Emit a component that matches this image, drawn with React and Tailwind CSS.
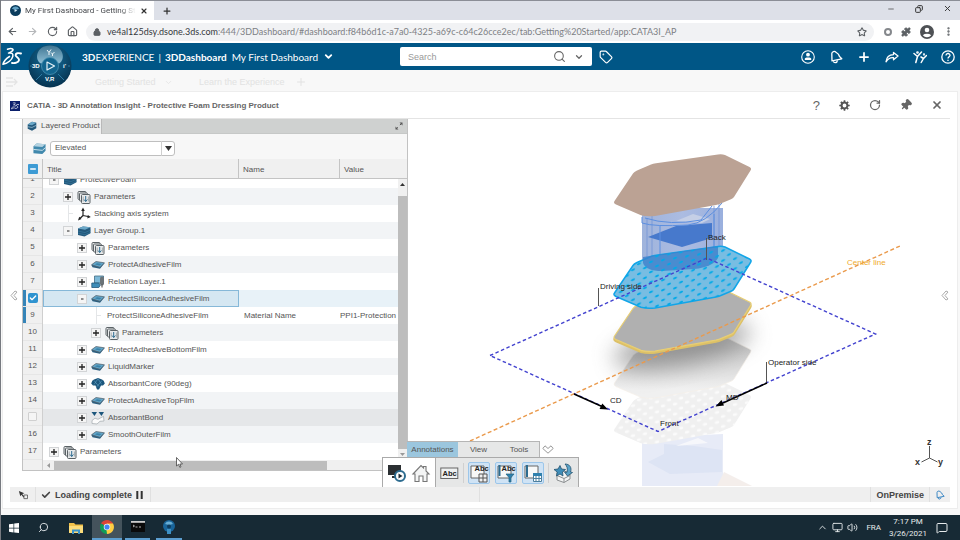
import React from 'react';
import { ArrowLeft, ArrowRight, RotateCw, Home, Lock, X, Plus, Star, Puzzle, ChevronDown, ChevronUp, Tag, Search, Pin, Check, Minus, Copy, MoreVertical, Monitor, Volume2, MessageSquare } from 'lucide-react';

const treeRows = [
  { id: 1, level: 0, exp: '-', icon: 'group', title: 'ProtectiveFoam' },
  { id: 2, level: 1, exp: '+', icon: 'params', title: 'Parameters' },
  { id: 3, level: 1, exp: '', icon: 'axis', title: 'Stacking axis system' },
  { id: 4, level: 1, exp: '-', icon: 'group', title: 'Layer Group.1' },
  { id: 5, level: 2, exp: '+', icon: 'params', title: 'Parameters' },
  { id: 6, level: 2, exp: '+', icon: 'film', title: 'ProtectAdhesiveFilm' },
  { id: 7, level: 2, exp: '+', icon: 'relation', title: 'Relation Layer.1' },
  { id: 8, level: 2, exp: '-', icon: 'film', title: 'ProtectSiliconeAdhesiveFilm', selected: true },
  { id: 9, level: 3, exp: '', icon: null, title: 'ProtectSiliconeAdhesiveFilm', name: 'Material Name', value: 'PPI1-Protection', child: true },
  { id: 10, level: 3, exp: '+', icon: 'params', title: 'Parameters' },
  { id: 11, level: 2, exp: '+', icon: 'film', title: 'ProtectAdhesiveBottomFilm' },
  { id: 12, level: 2, exp: '+', icon: 'film', title: 'LiquidMarker' },
  { id: 13, level: 2, exp: '+', icon: 'core', title: 'AbsorbantCore (90deg)' },
  { id: 14, level: 2, exp: '+', icon: 'film', title: 'ProtectAdhesiveTopFilm' },
  { id: 15, level: 2, exp: '+', icon: 'bond', title: 'AbsorbantBond', hover: true },
  { id: 16, level: 2, exp: '+', icon: 'film', title: 'SmoothOuterFilm' },
  { id: 17, level: 0, exp: '+', icon: 'params', title: 'Parameters' },
];

const indents = ['pl-[6px]', 'pl-[20px]', 'pl-[34px]', 'pl-[48px]'];

function TreeIcon({ type }) {
  if (type === 'params') {
    return (
      <svg className="h-[14px] w-[14px] shrink-0" viewBox="0 0 14 14" fill="#e9ebec" stroke="#5b6266" strokeWidth="1">
        <rect x="1" y="1.5" width="8" height="8" rx="1" />
        <rect x="2.5" y="3" width="8" height="8" rx="1" />
        <rect x="4.5" y="4.5" width="8.5" height="9" rx="1" />
        <path d="M8.7 6v5.5M7 9.5l1.7 2 1.7-2" stroke="#2d6c90" />
        <path d="M6.2 6.5v5M11.4 6.5v5" stroke="#8a9094" strokeWidth=".7" />
      </svg>
    );
  }
  if (type === 'axis') {
    return (
      <svg className="h-[14px] w-[14px] shrink-0" viewBox="0 0 14 14" fill="#222" stroke="#222" strokeWidth="1.2">
        <path d="M6 8.5V3M6 8.5L11 9.5M6 8.5L3 11.5" fill="none" />
        <path d="M6 .5l1.8 3.5H4.2zM13.8 10l-3.5 1.6.5-3.5zM1 13.5l1.2-3.8 2.3 2.3z" stroke="none" />
      </svg>
    );
  }
  if (type === 'group') {
    return (
      <svg className="h-[14px] w-[14px] shrink-0" viewBox="0 0 14 14">
        <path d="M1 4.5L6 2.5l7.5.8v6L7.5 12.500 1 11z" fill="#24597c" />
        <path d="M1 4.500L6 2.500l7.500.8L8 5.800z" fill="#6ba8c8" />
        <path d="M1 7l7 1.600 5.500-2.400M1 9.200l7 1.500 5.500-2.300" stroke="#3b7ea3" fill="none" strokeWidth=".6" />
      </svg>
    );
  }
  if (type === 'relation') {
    return (
      <svg className="h-[14px] w-[14px] shrink-0" viewBox="0 0 14 14">
        <path d="M3.500 1h9v7h-9z" fill="#7db9d8" stroke="#426c84" strokeWidth=".8" />
        <path d="M.8 8h7l1.500 2.200-1.500 2.300h-7z" fill="#3f8db8" stroke="#25587a" strokeWidth=".8" />
        <path d="M9 3.500a2 2 0 0 1 4 0v5a2 2 0 0 1-4 0z" fill="#6b7378" />
        <path d="M11 9.500v3" stroke="#444" />
      </svg>
    );
  }
  if (type === 'core') {
    return (
      <svg className="h-[14px] w-[14px] shrink-0" viewBox="0 0 14 14">
        <path d="M.2 6.500Q1 3 3 2.500L7 1l4 1.500q2 .5 2.800 4L12 8.500l-2 0L8 12.500H6L4.500 8.500 2 8.500z" fill="#1c567c" />
        <path d="M3 3.500l5 6M7 1.800l3.500 5.500M11 3.500L5.500 10M7 1.800L3 7.500" stroke="#6aaed0" strokeWidth=".5" />
      </svg>
    );
  }
  if (type === 'bond') {
    return (
      <svg className="h-[14px] w-[14px] shrink-0" viewBox="0 0 14 14">
        <path d="M.5 1h5.500L3.500 5zM7.500 1h5.500l-2.500 4z" fill="#1c567c" />
        <path d="M1 9.500l3-2.300 3 1.100 5.500-3 .5 4.700-4 .3-3 2.700-5-.5z" fill="#fbfbfb" stroke="#a9b0b4" strokeWidth=".8" />
      </svg>
    );
  }
  return (
    <svg className="h-[14px] w-[14px] shrink-0" viewBox="0 0 14 14">
      <path d="M.5 7.300L5 4l8.500 1.300L9 10.800 1.500 9.300z" fill="#2b5f80" />
      <path d="M.5 6.800L5 3.500l8.500 1.300L9 9.300z" fill="#62a5c8" stroke="#56626a" strokeWidth=".7" />
      <path d="M4 6.500l2-1.300 4.500.7-2 1.600z" fill="#3b82a8" />
    </svg>
  );
}

function DsLogo({ className }) {
  return (
    <svg className={className} viewBox="0 0 20 20" fill="none" stroke="#fff" strokeLinecap="round" strokeLinejoin="round">
      <path d="M5.500 2.300c3.500-1.300 6-.6 5.500.8-.4 1.200-2.800 2.400-4.500 3 3-.4 5 .2 4.300 3.200C10 12.700 6 16.500 1 17.300c.9-3.400 3.400-6 6.500-7.800" strokeWidth="1.500" />
      <path d="M19 6.500c-2.800-.9-5.500-.3-5.400 1.800.1 1.800 3.800 2.600 3.400 4.800-.4 2.300-4.300 3.500-7 2.900" strokeWidth="1.900" />
    </svg>
  );
}

function NotifyIcon({ className }) {
  return (
    <svg className={className} viewBox="0 0 14 14" fill="none" stroke="currentColor" strokeWidth="1.300" strokeLinejoin="round">
      <path d="M3 10.800L2.800 3.500C3 1.500 5.500.8 7 2.200Q10 4 10.500 6.500L12.800 8.800z" />
      <path d="M4.500 11.200c.2 2 3.500 2.200 4-.9" />
    </svg>
  );
}

function BrowserChrome() {
  return (
    <header className="font-['Open_Sans',sans-serif]">
      <div className="flex h-5 items-stretch border-t border-[#8b8e96] bg-[#dde0e8]">
        <div className="flex w-[153px] items-center gap-1 bg-white pl-[9px] pr-[6px]">
          <svg className="h-[11px] w-[11px] shrink-0" viewBox="0 0 12 12"><circle cx="6" cy="6" r="6" fill="#0b3c5d" /><path d="M2 4a4.500 4.500 0 0 1 8 0L6 5.500z" fill="#5f9fc2" /><path d="M5 4.500L8 6 5 7.500z" fill="#cfe4f0" /></svg>
          <span className="w-0 flex-1 whitespace-nowrap font-['Roboto',sans-serif] text-[8px] text-[#45484c] [mask-image:linear-gradient(90deg,#000_85%,transparent)]">My First Dashboard - Getting Sta</span>
          <button aria-label="Close tab"><X className="h-2 w-2 text-[#333]" strokeWidth={3.5} /></button>
        </div>
        <button aria-label="New tab" className="px-2"><Plus className="h-[10px] w-[10px] text-[#333]" strokeWidth={3} /></button>
        <div className="ml-auto flex items-center gap-5 pr-2 pb-[4px] text-[#333]">
          <button aria-label="Minimize"><Minus className="h-2 w-2" /></button>
          <button aria-label="Restore"><Copy className="h-2 w-2 -scale-x-100" strokeWidth={3} /></button>
          <button aria-label="Close"><X className="h-[9px] w-[9px]" strokeWidth={2.5} /></button>
        </div>
      </div>
      <div className="flex h-[23px] items-center bg-white pl-[6px] text-[#5c6064]">
        <div className="flex w-[79px] items-center gap-[9px]">
          <button aria-label="Back"><ArrowLeft className="h-[11px] w-[11px]" strokeWidth={2.5} /></button>
          <button aria-label="Forward"><ArrowRight className="h-[11px] w-[11px] text-[#b5b7ba]" strokeWidth={2.5} /></button>
          <button aria-label="Reload"><RotateCw className="h-[11px] w-[11px]" strokeWidth={2.5} /></button>
          <button aria-label="Home"><Home className="h-[11px] w-[11px]" strokeWidth={2.5} /></button>
        </div>
        <div className="flex h-[18px] flex-1 items-center gap-[6px] rounded-full bg-[#f1f2f4] pl-[7px] pr-[7px]">
          <Lock className="h-2 w-2 fill-[#5c6064]" strokeWidth={3} />
          <span className="flex-1 whitespace-nowrap font-['Lato',sans-serif] text-[9px] text-[#7d8084]"><span className="text-[#35383c]">ve4al125dsy.dsone.3ds.com</span>:444/3DDashboard/#dashboard:f84b6d1c-a7a0-4325-a69c-c64c26cce2ec/tab:Getting%20Started/app:CATA3I_AP</span>
          <button aria-label="Bookmark"><Star className="h-[10px] w-[10px]" strokeWidth={2.5} /></button>
        </div>
        <div className="flex w-[86px] items-center gap-[9px] pl-[10px]">
          <span className="h-2 w-2 rounded-full border-2 border-[#85888c]" />
          <Puzzle className="h-[10px] w-[10px] fill-[#5c6064]" />
          <svg className="h-[14px] w-[14px]" viewBox="0 0 14 14"><circle cx="7" cy="7" r="7" fill="#4e5155" /><circle cx="7" cy="5" r="2.300" fill="#fff" /><path d="M2.800 10.200a5 3 0 0 1 8.400 0 5.500 5.500 0 0 1-8.400 0z" fill="#fff" /></svg>
          <button aria-label="Menu"><MoreVertical className="h-[11px] w-[11px]" strokeWidth={3} /></button>
        </div>
      </div>
    </header>
  );
}

function Compass() {
  return (
    <svg className="absolute left-[27px] top-0 z-10 h-[46px] w-[44px]" viewBox="0 0 44 46">
      <defs>
        <radialGradient id="ball" cx="50%" cy="35%" r="65%">
          <stop offset="0" stopColor="#15719f" />
          <stop offset="1" stopColor="#06324f" />
        </radialGradient>
        <linearGradient id="gloss" x1="0" y1="0" x2="0" y2="1">
          <stop offset="0" stopColor="#3f7592" />
          <stop offset="1" stopColor="#8fbfd6" />
        </linearGradient>
      </defs>
      <circle cx="22" cy="23" r="21.500" fill="url(#ball)" />
      <path d="M22 18l-9 2.500C6 17 8 2.500 22 2.500S38 17 31 20.500z" fill="url(#gloss)" />
      <circle cx="22" cy="23" r="8.500" fill="#12658f" stroke="#4d94b5" strokeWidth=".8" />
      <path d="M19 19l7.500 4-7.500 4z" fill="none" stroke="#e4f1f7" strokeWidth="1.200" strokeLinejoin="round" />
      <path d="M8 37l6-6M36 37l-6-6M2 23h2M40 23h2" stroke="#2d7ba3" strokeWidth="1" />
      <path d="M19 7l2 2.500L23 6.500M21 9.500v2.500M23 9.500l1.500 1.500 2-2M24.500 11v2" fill="none" stroke="#f0f7fa" strokeWidth="1" />
      <g fill="#fff" fontFamily="Liberation Sans" fontWeight="bold" fontSize="6">
        <text x="4" y="25">3D</text>
        <text x="35" y="25">iʹ</text>
        <text x="17" y="38">V,R</text>
      </g>
    </svg>
  );
}

function TopBar() {
  return (
    <div className="relative">
      <div className="flex h-[27px] items-center bg-[#005686] font-['Lato',sans-serif] text-[10px] text-white">
        <DsLogo className="ml-[1px] h-5 w-5" />
        <div className="ml-[60px] flex w-[318px] items-center whitespace-nowrap">
          <span><b>3D</b>EXPERIENCE</span>
          <span className="mx-[4px]">|</span>
          <b>3DDashboard</b>
          <span className="ml-[5px]">My First Dashboard</span>
          <button aria-label="Dashboards" className="ml-[5px]"><ChevronDown className="h-[11px] w-[11px]" strokeWidth={4} /></button>
        </div>
        <div className="flex h-[19px] w-[192px] items-center gap-2 rounded-[2px] bg-white px-2 text-[#666]">
          <input aria-label="Search" placeholder="Search" className="w-0 flex-1 font-['Liberation_Sans',sans-serif] text-[9px] outline-none placeholder:text-[#999]" />
          <button aria-label="Run search"><Search className="h-[13px] w-[13px]" strokeWidth={2} /></button>
          <button aria-label="Search options"><ChevronDown className="h-[10px] w-[10px]" strokeWidth={3} /></button>
        </div>
        <button aria-label="Tags" className="ml-[7px]"><Tag className="h-[14px] w-[14px]" strokeWidth={2} /></button>
        <div className="ml-auto flex items-center gap-[14px] pr-[5px]">
          <button aria-label="Profile"><svg className="h-[14px] w-[14px]" viewBox="0 0 14 14"><circle cx="7" cy="7" r="6.300" fill="none" stroke="#fff" strokeWidth="1.100" /><circle cx="7" cy="4.700" r="1.900" fill="#fff" /><path d="M3.800 10V8.500c0-1.500 6.400-1.500 6.400 0V10z" fill="#fff" /></svg></button>
          <button aria-label="Notifications"><NotifyIcon className="h-[14px] w-[14px]" /></button>
          <button aria-label="Add"><Plus className="h-[14px] w-[14px]" strokeWidth={3} /></button>
          <button aria-label="Share"><svg className="h-[14px] w-[14px]" viewBox="0 0 14 14" fill="none" stroke="#fff" strokeWidth="1.300" strokeLinejoin="round"><path d="M8.500 2.500L13 6 8.500 9.800V7.600C5.500 7.300 3 8.500 1 11.800 1.500 7 4.500 4.700 8.500 4.600z" /></svg></button>
          <button aria-label="Community"><svg className="h-[14px] w-[14px]" viewBox="0 0 14 14" fill="none" stroke="#fff" strokeWidth="1.500" strokeLinecap="round" strokeLinejoin="round"><path d="M1 3.500l3.500 3L8.500 2M4.500 6.500L2.800 12.500M8 7l2.500 1.500 3-3M10.500 8.500l-2.300 4" /><circle cx="4.500" cy="2.500" r=".6" /><circle cx="11" cy="4.500" r=".4" /></svg></button>
          <button aria-label="Help"><svg className="h-[14px] w-[14px]" viewBox="0 0 14 14" fill="none" stroke="#fff" strokeWidth="1.300"><circle cx="7" cy="7" r="6.200" /><path d="M5 5.500c0-3 4.300-2.300 4 0-.2 1.200-2 1.300-2 3M7 9.800v1.300" /></svg></button>
        </div>
      </div>
      <nav className="flex h-[21px] items-center pl-[5px] pt-[3px] text-[9px] text-[#e2e2e2]">
        <svg className="h-[10px] w-[12px]" viewBox="0 0 12 10" fill="none" stroke="#e4e4e4" strokeWidth="1.300"><path d="M0 1h7M0 5h11M0 9h7M8 2l3 3-3 3" /></svg>
        <a href="#started" className="ml-[77px] w-[69px] whitespace-nowrap">Getting Started</a>
        <ChevronDown className="h-[9px] w-[9px]" />
        <a href="#learn" className="ml-[26px] w-[92px] whitespace-nowrap">Learn the Experience</a>
        <Plus className="ml-1 h-3 w-3" />
      </nav>
      <Compass />
    </div>
  );
}

function TreeRow({ row }) {
  const height = row.id === 1 ? 'h-[9px]' : 'h-[17px]';
  let bg = row.id % 2 === 0 ? 'bg-[#f2f4f6]' : 'bg-white';
  if (row.selected) bg = 'bg-[#e8f2f8]';
  if (row.hover) bg = 'bg-[#e5e7e9]';
  const marked = row.selected || row.child;
  return (
    <tr className={bg}>
      <td className="border-r border-[#cfcfcf] bg-[#f0f0f0] p-0">
        <div className={`flex items-end overflow-hidden border-b border-[#e6e6e6] ${height}`}>
          {marked && <span className="h-[17px] w-[3px] bg-[#3584b8]" />}
          <span className={`flex h-[17px] flex-1 items-center justify-center ${marked ? 'pr-[3px]' : ''}`}>
            {row.selected && (
              <label className="relative block h-[10px] w-[10px]">
                <input type="checkbox" defaultChecked aria-label="Select row 8" className="block h-[10px] w-[10px] appearance-none rounded-[2px] bg-[#2f93d0]" />
                <Check className="pointer-events-none absolute left-[1px] top-[1px] h-2 w-2 text-white" strokeWidth={4} />
              </label>
            )}
            {row.hover && <input type="checkbox" aria-label="Select row 15" className="h-[9px] w-[9px] appearance-none rounded-[1px] border border-[#d0d0d0] bg-[#f5f5f5]" />}
            {!row.selected && !row.hover && row.id}
          </span>
        </div>
      </td>
      <td className={`p-0 ${row.selected ? 'bg-[#d5e7f2] outline outline-[#86b8d8] -outline-offset-1' : ''}`}>
        <div className={`flex items-end overflow-hidden ${height} ${indents[row.level]}`}>
          <div className="flex h-[17px] items-center whitespace-nowrap">
            {row.exp ? (
              <button aria-label={`Toggle ${row.title}`} className="flex h-[10px] w-[10px] items-center justify-center border border-[#d2d4d6] bg-[#f5f5f5]">
                <svg className="h-[6px] w-[6px]" viewBox="0 0 6 6" stroke="#222" strokeWidth={row.exp === '+' ? 1.3 : 1}>
                  {row.exp === '+' ? <path d="M0 3h6M3 0v6" /> : <path d="M2 3h2.500" />}
                </svg>
              </button>
            ) : (
              <span className="ml-[5px] h-[17px] w-[5px] border-l border-[#e4e6e8] before:block before:h-[9px] before:border-b before:border-[#e4e6e8]" />
            )}
            <span className="flex items-center gap-[3px] pl-[4px]">
              {row.icon && <TreeIcon type={row.icon} />}
              <span className={row.child ? 'pl-[2px]' : ''}>{row.title}</span>
            </span>
          </div>
        </div>
      </td>
      <td className="p-0 pl-[5px] whitespace-nowrap">{row.name}</td>
      <td className="p-0 whitespace-nowrap">{row.value}</td>
    </tr>
  );
}

function LayerPanel() {
  return (
    <section className="flex w-[386px] shrink-0 flex-col self-start border-x border-b border-[#c2c2c2] bg-[#f0f0f0]">
      <div className="flex h-[15px] items-center justify-between border-b border-[#c6c8c7] bg-[#cfd1d0] pr-1">
        <button className="flex h-[15px] w-[79px] items-center gap-[4px] border-r border-[#b9b9b9] bg-[#f0f0f0] pl-1 whitespace-nowrap">
          <svg className="h-[10px] w-[10px] shrink-0" viewBox="0 0 14 14"><path d="M1 5l6-4 6 1.500V10l-6 3.500L1 11z" fill="#24597c" /><path d="M1 5l6-4 6 1.500L7 6z" fill="#6ba8c8" /><path d="M1 8l6 1 6-3" stroke="#a7cadc" fill="none" /></svg>
          <span>Layered Product</span>
        </button>
        <button aria-label="Expand panel"><svg className="h-2 w-2" viewBox="0 0 8 8" fill="#555" stroke="#555"><path d="M1 7l6-6" strokeDasharray="2.500 3" /><path d="M4.500.5h3v3zM.5 4.500v3h3z" stroke="none" /></svg></button>
      </div>
      <div className="flex h-[25px] items-center gap-[4px] bg-[#f7f7f7] pl-[10px] pt-[3px]">
        <svg className="h-[13px] w-[13px]" viewBox="0 0 14 14"><path d="M.5 4.500L4 1.500l9.500 1v7L10 13 .5 12z" fill="#4189ad" /><path d="M.5 4.500L4 1.500l9.500 1L10 5.500z" fill="#b5d3e1" /><path d="M.5 8l9.500 1 3.500-3" fill="none" stroke="#d3e6ef" /></svg>
        <div className="relative h-[15px] w-[125px]">
          <select aria-label="View mode" className="block h-[15px] w-full appearance-none rounded-[3px] border border-[#bfbfbf] bg-white pl-1 leading-none outline-none">
            <option>Elevated</option>
          </select>
          <span className="pointer-events-none absolute right-0 top-0 flex h-[15px] w-[14px] items-center justify-center border-l border-[#cfcfcf]">
            <svg className="h-[5px] w-[7px]" viewBox="0 0 7 5"><path d="M0 0h7L3.500 5z" fill="#333" /></svg>
          </span>
        </div>
      </div>
      <div className="flex">
        <table className="w-0 flex-1 table-fixed border-separate border-spacing-0 bg-white">
          <colgroup>
            <col className="w-[20px]" />
            <col className="w-[196px]" />
            <col className="w-[101px]" />
            <col />
          </colgroup>
          <thead>
            <tr className="h-[20px] bg-[#f0f0f0] text-left">
              <th className="border-r border-b border-[#c4c4c4] p-0">
                <label className="relative mx-auto block h-[10px] w-[10px]">
                  <input type="checkbox" aria-label="Select all rows" className="block h-[10px] w-[10px] appearance-none rounded-[1px] bg-[#3d9bd4]" />
                  <Minus className="pointer-events-none absolute left-[1px] top-[1px] h-2 w-2 text-white" strokeWidth={4} />
                </label>
              </th>
              <th className="border-r border-b border-[#c4c4c4] p-0 pl-1 pt-[2px] font-normal">Title</th>
              <th className="border-r border-b border-[#c4c4c4] p-0 pl-1 pt-[2px] font-normal">Name</th>
              <th className="border-b border-[#c4c4c4] p-0 pl-1 pt-[2px] font-normal">Value</th>
            </tr>
          </thead>
          <tbody>
            {treeRows.map((row) => <TreeRow key={row.id} row={row} />)}
          </tbody>
        </table>
        <div className="flex w-[9px] flex-col items-center bg-[#f0f0f0]">
          <div className="h-[20px] w-full border-b border-[#c4c4c4]" />
          <svg className="mt-[4px] h-[3px] w-[5px]" viewBox="0 0 5 3"><path d="M0 3h5L2.500 0z" fill="#333" /></svg>
          <div className="mt-[10px] w-full flex-1 bg-[#bdbdbd]" />
          <svg className="my-[4px] h-[3px] w-[5px]" viewBox="0 0 5 3"><path d="M0 0h5L2.500 3z" fill="#999" /></svg>
        </div>
      </div>
      <div className="flex h-[10px] items-center">
        <div className="h-full w-[20px] border-r border-[#cfcfcf]" />
        <svg className="mx-[4px] h-[5px] w-[3px]" viewBox="0 0 3 5"><path d="M3 0v5L0 2.500z" fill="#999" /></svg>
        <div className="h-[9px] w-[273px] bg-[#bdbdbd]" />
      </div>
    </section>
  );
}

const PLATE = 'M614.500 201L633 173.500Q634 172 637 170.500L651 164.500Q653 163.700 656 163.300L718 154.500Q722 154 725 155L749.500 167Q752 168.300 750.500 170.500L734 197Q733 198.500 731 199.300L722 203Q719 204.300 716 205L655 216Q647 217 641 215.300L616 204.500Q613 203 614.500 201Z';

function Scene() {
  return (
    <svg className="absolute inset-0 h-full w-full" viewBox="408 119 542 368" role="img" aria-label="Exploded view of the foam dressing layers">
      <defs>
        <pattern id="dots" width="12" height="10" patternUnits="userSpaceOnUse" patternTransform="skewY(-9)">
          <ellipse cx="3" cy="3" rx="2.200" ry="1" fill="#00a9e8" transform="rotate(-15 3 3)" />
          <ellipse cx="9" cy="8" rx="2.200" ry="1" fill="#00a9e8" transform="rotate(-15 9 8)" />
        </pattern>
        <pattern id="whiteDots" width="12" height="10" patternUnits="userSpaceOnUse" patternTransform="skewY(-9)">
          <ellipse cx="3" cy="3" rx="2.300" ry="1.400" fill="#fff" />
          <ellipse cx="9" cy="8" rx="2.300" ry="1.400" fill="#fff" />
        </pattern>
        <linearGradient id="body" x1="0" x2="1" y1="0" y2="0">
          <stop offset="0" stopColor="#8ea6d6" />
          <stop offset=".5" stopColor="#9db0dc" />
          <stop offset="1" stopColor="#88a2d8" />
        </linearGradient>
        <linearGradient id="fade" x1="0" x2="0" y1="0" y2="1">
          <stop offset="0.2" stopColor="#c9c9c9" />
          <stop offset=".85" stopColor="#f0f0f0" />
        </linearGradient>
        <filter id="soft" x="-30%" y="-50%" width="160%" height="200%"><feGaussianBlur stdDeviation="11" /></filter>
      </defs>

      {/* mirror image on the floor */}
      <path d="M642 438l81-4v52h-81z" fill="#e7ebf7" />
      <path d="M648 462l16-8v-10l30 2 28 4v22l-52 2z" fill="#dde4f4" />
      <path d="M676 446l22-8 10 5z" fill="#f6f7fb" />
      <path d="M717 486l7-14 28 14z" fill="#f4eeeb" />
      <path d={PLATE} transform="translate(0 228)" fill="#f0f0f0" />
      <path d={PLATE} transform="translate(0 228)" fill="url(#whiteDots)" opacity=".7" />
      <path d={PLATE} transform="translate(0 182)" fill="url(#fade)" stroke="#f5efe8" strokeWidth=".7" />
      <ellipse cx="682" cy="345" rx="70" ry="20" transform="rotate(-12 682 345)" fill="#666" opacity=".55" filter="url(#soft)" />

      <path d={PLATE} transform="translate(0 137)" fill="#e2c66a" stroke="#dcc067" strokeWidth="1.500" />
      <path d={PLATE} transform="translate(0 135)" fill="#b0b0b0" stroke="#e9cf74" strokeWidth="1.200" />

      {/* absorbant core */}
      <path d="M642 208h81v50l-14 10-20 4h-34l-13-8z" fill="url(#body)" opacity=".85" />
      <path d="M652 214v50M714 206v52M719 204v54M647 218v46" stroke="#7294d6" strokeWidth="1.500" opacity=".5" />
      <path d="M648 237l28-11 36-3v15l-30 9z" fill="#4779cc" />
      <path d="M676 221l17-7 17 5-8 4z" fill="#c5cfe6" />
      <path d="M642 217v6q12 4 46 2 18-2 34-22M645 218q25 8 56 2l11-14M660 225v46M714 214v46" fill="none" stroke="#5c8fe0" strokeWidth="1" />
      <path d={PLATE} fill="#bba294" />

      <path d={PLATE} transform="translate(0 92)" fill="#78bde2" stroke="#12a5e8" strokeWidth="1.500" />
      <path d="M643 257l68-10 7-1v12q-5 9-24 11l-32 2q-16 0-19-8z" fill="#3f7fcb" opacity=".8" />
      <path d={PLATE} transform="translate(0 92)" fill="url(#dots)" />

      <path d="M490 355.500L707 258L875.500 334L658 431.500Z" fill="none" stroke="#4242cf" strokeWidth="1.400" strokeDasharray="3.500 2.500" />
      <path d="M470 441L900 246" stroke="#ea9a4c" strokeWidth="1.400" strokeDasharray="4 2.500" />
      <path d="M706.500 238v22M598.500 288v18M766.500 362v21" stroke="#555" strokeWidth="1" />
      <path d="M574 394l28 12.500M767 383l-44 20" stroke="#000" strokeWidth="1.500" />
      <path d="M608 409.500l-8.500-.5 2.800-5.500zM715.500 406.500l6-6.500 2.500 5.500z" />

      <g fontFamily="Liberation Sans, sans-serif" fontSize="8" fill="#222">
        <text x="600" y="289">Driving side</text>
        <text x="708" y="240">Back</text>
        <text x="768" y="365">Operator side</text>
        <text x="610" y="403">CD</text>
        <text x="726" y="400">MD</text>
        <text x="660" y="426">Front</text>
        <text x="847" y="265" fill="#efaa2c">Center line</text>
      </g>
      <path d="M929.500 446v12M929.500 458l-8 4M929.500 458l8 4" fill="none" stroke="#555" strokeWidth="1" />
      <g fontFamily="Liberation Sans, sans-serif" fontSize="9" fontWeight="bold" fill="#333">
        <text x="927" y="445">z</text>
        <text x="915" y="465">x</text>
        <text x="938" y="465">y</text>
      </g>
    </svg>
  );
}

function ActionBar() {
  return (
    <div className="absolute bottom-0 -left-[26px] text-[#555]">
      <div className="ml-[25px] flex h-[16px] items-center">
        <div className="flex h-[16px] border-t border-r border-[#b5b5b5] bg-[#e6e7e7]">
          <button className="w-[51px] bg-[#9bc6de]">Annotations</button>
          <button className="w-[41px]">View</button>
          <button className="w-[40px]">Tools</button>
        </div>
        <button aria-label="Collapse toolbar" className="ml-[2px]"><svg className="h-[9px] w-3" viewBox="0 0 12 9" fill="none" stroke="#999"><path d="M.8 3.500L3 .8l3 2.700L9 .8l2.200 2.700L6 8.200z" /></svg></button>
      </div>
      <div className="flex h-[30px] w-[197px] items-center border border-b-0 border-[#aaa] bg-[#e6e7e7]">
        <div className="flex h-full w-[53px] items-center justify-between border-r border-[#aaa] bg-white px-[4px]">
          <button aria-label="Play view"><svg className="h-5 w-5" viewBox="0 0 20 20"><path d="M1 2h13v10H1z" fill="#2b2f32" /><path d="M5 14h6" stroke="#2b2f32" strokeWidth="2" /><circle cx="13" cy="13" r="5" fill="#fff" stroke="#2d6c90" strokeWidth="2" /><path d="M11.500 10.500l4 2.500-4 2.500z" fill="#1d2c36" /></svg></button>
          <button aria-label="Home view"><svg className="h-5 w-5" viewBox="0 0 20 20"><path d="M2 11l8-8.500 2.500 2.500V3.500h2.500V8l3 3h-2v7.500h-4V13H8v5.500H4V11z" fill="#f4f5f5" stroke="#777" strokeWidth="1.100" /></svg></button>
        </div>
        <button aria-label="Text" className="ml-[4px]"><svg className="h-5 w-[19px]" viewBox="0 0 19 20"><rect x=".8" y="5" width="17" height="10.500" fill="#eef0f0" stroke="#666" /><text x="2.500" y="13" fontSize="7.500" fontWeight="bold" fontFamily="Liberation Sans" fill="#222">Abc</text></svg></button>
        <span className="mx-[4px] h-5 w-px bg-[#d0d0d0]" />
        <div className="flex gap-[5px]">
          <button aria-label="Annotation grid" className="rounded-[2px] border border-[#9cc6ea] bg-[#cfe3f5]"><svg className="h-5 w-5" viewBox="0 0 20 20"><path d="M2 3h13v12H2z" fill="#f7f8f8" stroke="#666" /><text x="5.500" y="8" fontSize="7.500" fontWeight="bold" fontFamily="Liberation Sans" fill="#222">Abc</text><path d="M10 11h8v8h-8zM14 11v8M10 15h8" fill="#f0f0f0" stroke="#555" /></svg></button>
          <button aria-label="Annotation filter" className="rounded-[2px] border border-[#9cc6ea] bg-[#cfe3f5]"><svg className="h-5 w-5" viewBox="0 0 20 20"><path d="M2 3h13v12H2z" fill="#f7f8f8" stroke="#666" /><path d="M3.500 2v11" stroke="#2d6c90" strokeWidth="2" /><text x="5.500" y="8" fontSize="7.500" fontWeight="bold" fontFamily="Liberation Sans" fill="#222">Abc</text><path d="M10 11h8l-3 3.500V19h-2v-4.500z" fill="#2f80ad" stroke="#23617f" strokeWidth=".7" /></svg></button>
          <button aria-label="Annotation table" className="rounded-[2px] border border-[#9cc6ea] bg-[#cfe3f5]"><svg className="h-5 w-5" viewBox="0 0 20 20"><path d="M2 3h13v12H2z" fill="#f7f8f8" stroke="#666" /><path d="M4 2v12" stroke="#2d6c90" strokeWidth="2" /><path d="M10.500 10.500h8v8h-8zM13 11v7.500M16 11v7.500M10.500 15.500h8" fill="#fff" stroke="#4b7f9e" /><path d="M10 10h9v3h-9z" fill="#2f80ad" /></svg></button>
        </div>
        <span className="mx-[4px] h-5 w-px bg-[#d0d0d0]" />
        <button aria-label="Reset"><svg className="h-5 w-5" viewBox="0 0 20 20"><path d="M4 10l7-2 6 2v6l-6 3.500L4 17z" fill="#f3f4f4" stroke="#8b8f91" /><path d="M4 12.500l7 3 6-3M11 15.500v4" fill="none" stroke="#8b8f91" /><path d="M1 6.500l4-.5 2-3.500 1.500 3.500 4 .5-3 2.500.5 4L7 11l-3.500 2 .7-4z" fill="#3f8db8" stroke="#23526e" strokeWidth=".8" /><path d="M12 1c5 0 7 4 5.500 8l2 .5L14.500 13l-3-4 2.500.3C15 6 14 3 12 1z" fill="#5aa3c8" stroke="#23526e" strokeWidth=".8" /></svg></button>
      </div>
    </div>
  );
}

function WidgetWindow() {
  return (
    <main className="ml-[1px] mr-[2px] mb-[6px] flex flex-1 flex-col border border-[#ededed] bg-white pl-[7px] pr-[7px]">
      <div className="flex h-[27px] items-center border-b border-[#e4e4e4] pt-[2px] text-[#666]">
        <span className="flex h-[10px] w-[10px] items-center justify-center bg-[#0b1f6b]"><DsLogo className="h-2 w-2" /></span>
        <h1 className="ml-[7px] text-[8px] font-bold">CATIA - 3D Annotation Insight - Protective Foam Dressing Product</h1>
        <div className="ml-auto flex items-center gap-[19px] pr-[7px] pb-[2px]">
          <button aria-label="Widget help" className="text-[13px] leading-none">?</button>
          <button aria-label="Preferences"><svg className="h-[11px] w-[11px]" viewBox="0 0 12 12" fill="none" stroke="#555"><circle cx="6" cy="6" r="3.200" strokeWidth="2.200" /><path d="M6 .3v11.400M.3 6h11.400M2 2l8 8M10 2l-8 8" strokeWidth="1.800" strokeDasharray="2 7.400 2 0" /></svg></button>
          <button aria-label="Refresh"><RotateCw className="h-3 w-3" strokeWidth={2.5} /></button>
          <button aria-label="Pin"><Pin className="h-3 w-3 rotate-45 fill-[#666]" strokeWidth={2.5} /></button>
          <button aria-label="Close widget"><X className="h-3 w-3" strokeWidth={3.5} /></button>
        </div>
      </div>
      <div className="relative flex flex-1">
        <button aria-label="Collapse left" className="flex h-[352px] w-[12px] items-center"><svg className="h-[11px] w-[9px]" viewBox="0 0 9 10" fill="none" stroke="#aaa"><path d="M5 .5L1 5l4 4.500 2-1L4 5l3-3.500z" /></svg></button>
        <LayerPanel />
        <div className="relative flex-1">
          <Scene />
          <button aria-label="Collapse right" className="absolute right-0 top-0 flex h-[352px] items-center"><svg className="h-[11px] w-[9px]" viewBox="0 0 9 10" fill="none" stroke="#aaa"><path d="M5 .5L1 5l4 4.500 2-1L4 5l3-3.500z" /></svg></button>
          <ActionBar />
        </div>
        {/* mouse pointer */}
        <svg className="absolute left-[166px] top-[338px] h-[11px] w-[7px]" viewBox="0 0 7 11"><path d="M.5.5v8.500l2-1.700 1.300 3 1.200-.5-1.200-2.800h2.700z" fill="#fff" stroke="#444" strokeWidth=".8" /></svg>
      </div>
      <footer className="mb-[6px] flex h-[15px] items-center bg-[#efefef] text-[9px] font-bold text-[#444]">
        <div className="flex h-full w-[26px] items-center justify-center border-r border-[#e0e0e0]">
          <svg className="h-[10px] w-[10px]" viewBox="0 0 11 11"><path d="M1 1l6 2.500-2.300.8L7 7.500l-1 .7-2.200-3L2.500 7z" fill="#333" /><path d="M6.500 5.500h4v4h-4z" fill="none" stroke="#555" strokeWidth=".9" /></svg>
        </div>
        <div className="flex h-full w-[115px] items-center border-r border-[#e0e0e0] pl-[5px]">
          <Check className="h-[10px] w-[10px]" strokeWidth={4} />
          <span className="ml-[4px] whitespace-nowrap">Loading complete</span>
          <svg className="ml-[4px] h-2 w-[7px]" viewBox="0 0 7 8"><path d="M1.300 0v8M5.700 0v8" stroke="#333" strokeWidth="2" /></svg>
        </div>
        <div className="h-full w-[329px] border-r border-[#e0e0e0]" />
        <div className="ml-auto flex h-full items-center border-l border-[#e0e0e0] px-[5px]">OnPremise</div>
        <button aria-label="Status notifications" className="flex h-full w-[21px] items-center justify-center border-l border-[#e0e0e0] text-[#2f80c0]"><NotifyIcon className="h-[10px] w-[10px]" /></button>
      </footer>
    </main>
  );
}

function Taskbar() {
  return (
    <div className="flex h-[25px] items-center bg-[#172a35] font-['Roboto',sans-serif] text-[8px] text-[#e6eaec]">
      <button aria-label="Start" className="flex w-[26px] justify-center"><svg className="h-[10px] w-[10px]" viewBox="0 0 10 10" fill="#fff"><path d="M0 1.300l4.500-.6v4H0zM5.200.6L10 0v4.700H5.200zM0 5.400h4.500v4L0 8.800zM5.200 5.400H10V10l-4.800-.6z" /></svg></button>
      <button aria-label="Windows search" className="flex w-[32px] justify-center"><Search className="h-[11px] w-[11px] -scale-x-100" /></button>
      <button aria-label="Explorer" className="flex w-[33px] justify-center"><svg className="h-3 w-[14px]" viewBox="0 0 14 12"><path d="M0 1h5l1.500 1.500H14V11H0z" fill="#f0c14b" /><path d="M0 4h14v7H0z" fill="#fbdc7c" /><path d="M3 12V7.500h8V12H9V9.500H5V12z" fill="#3c93c9" /></svg></button>
      <button aria-label="Chrome" className="flex h-full w-[30px] items-center justify-center border-b-2 border-[#5c9ed0] bg-[#44535c]">
        <svg className="h-[14px] w-[14px]" viewBox="0 0 16 16"><path d="M8 8L1.100 4A8 8 0 0 1 14.900 4z" fill="#db4437" /><path d="M8 8L1.100 4A8 8 0 0 0 8 16l3.500-6z" fill="#0f9d58" /><path d="M8 8h-1l1 8a8 8 0 0 0 6.900-12H8z" fill="#ffcd40" /><circle cx="8" cy="8" r="3.700" fill="#f1f1f1" /><circle cx="8" cy="8" r="2.900" fill="#4285f4" /></svg>
      </button>
      <button aria-label="Terminal" className="ml-[3px] flex h-full w-[25px] items-center justify-center border-b-2 border-[#5c9ed0]">
        <svg className="h-[11px] w-[14px]" viewBox="0 0 14 11"><path d="M0 0h14v11H0z" fill="#0a0a0a" /><path d="M0 0h14v1.800H0z" fill="#ccc" /><path d="M2 4l1.500 1L2 6M4.500 6h2M8 6h2" stroke="#ddd" fill="none" strokeWidth=".8" /></svg>
      </button>
      <button aria-label="3DEXPERIENCE" className="ml-[6px] flex h-full w-[26px] items-center justify-center border-b-2 border-[#5c9ed0]">
        <svg className="h-[14px] w-3" viewBox="0 0 12 14"><circle cx="6" cy="6" r="6" fill="#19659a" /><path d="M2 4a4.500 4.500 0 0 1 8 0L6 5z" fill="#69aed4" /><path d="M4 9v5h4V9z" fill="#3d90c4" /><circle cx="6" cy="6.500" r="2" fill="#0e3c5e" /></svg>
      </button>
      <div className="ml-auto flex items-center">
        <ChevronUp className="h-[11px] w-[11px]" />
        <Monitor className="ml-[4px] h-[11px] w-[11px]" />
        <Volume2 className="ml-[4px] h-[11px] w-[11px]" />
        <span className="ml-[8px]">FRA</span>
        <div className="ml-[8px] w-[38px] text-center leading-[12px]">
          <div>7:17 PM</div>
          <div>3/26/2021</div>
        </div>
        <MessageSquare className="ml-[9px] mr-[12px] h-[12px] w-[12px]" />
      </div>
    </div>
  );
}

export default function App() {
  return (
    <div className="flex min-h-screen flex-col overflow-hidden border-l border-[#777a80] bg-[#f8f8f8] font-['Liberation_Sans',sans-serif] text-[8px] leading-[12px] text-[#555]">
      <BrowserChrome />
      <TopBar />
      <WidgetWindow />
      <Taskbar />
    </div>
  );
}
